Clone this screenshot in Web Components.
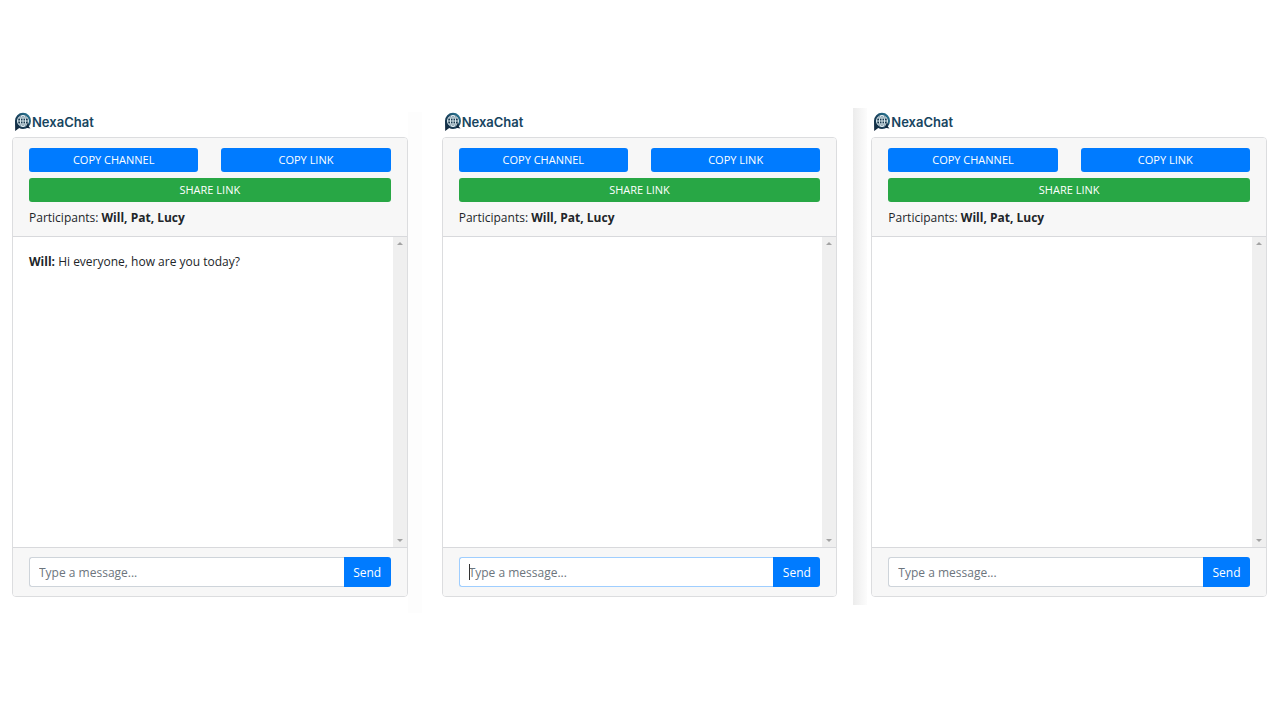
<!DOCTYPE html>
<html lang="en">
<head>
<meta charset="utf-8">
<meta name="viewport" content="width=device-width, initial-scale=1">
<title>NexaChat</title>
<style>
  body { margin: 0; background: #fff; color: #212529; font: 12px/18px "Open Sans", "Noto Sans", sans-serif; }
</style>
</head>
<body>
<chat-board>
  <chat-window people="Will, Pat, Lucy" edge="faint">
    <chat-message from="Will">Hi everyone, how are you today?</chat-message>
  </chat-window>
  <chat-window people="Will, Pat, Lucy" active></chat-window>
  <chat-window people="Will, Pat, Lucy" edge="shade"></chat-window>
</chat-board>
<script>
class BaseElement extends HTMLElement {
  constructor() {
    super();
    this.attachShadow({ mode: "open" });
  }
  connectedCallback() {
    this.shadowRoot.innerHTML = this.render();
  }
}

customElements.define("chat-board", class extends BaseElement {
  render() {
    return `<style>
      :host { display: block; }
      main { display: grid; grid-template-columns: repeat(3, minmax(0, 1fr)); align-items: start; gap: 34px; box-sizing: border-box; min-height: 100vh; padding: 112px 13px 24px 12px; }
    </style><main><slot></slot></main>`;
  }
});

customElements.define("nexa-logo", class extends BaseElement {
  render() {
    return `<style>
      :host { display: flex; align-items: center; height: 20px; padding-left: 2px; color: #17455f; font: 600 13px/20px Inter, sans-serif; }
      svg { display: block; }
    </style>
    <svg width="18" height="20" viewBox="0 0 18 20" aria-hidden="true">
      <defs><linearGradient id="g" x1="1" y1="0" x2="0" y2="1"><stop offset="0" stop-color="#2c86a3"/><stop offset=".5" stop-color="#1b4560"/><stop offset="1" stop-color="#0f2237"/></linearGradient></defs>
      <path d="M9 .8a8 8 0 0 1 8 8.200 8 8 0 0 1-8 8c-1.400 0-2.700-.3-3.800-.9L1.200 19 1 9A8 8 0 0 1 9 .8z" fill="url(#g)"/>
      <path d="M14 13.500l2.500 3-4.500-.8z" fill="#11283e"/>
      <circle cx="9" cy="9" r="6" fill="#17364c"/>
      <g fill="none" stroke="#dcebf0" stroke-width="1">
        <circle cx="9" cy="9" r="5.500"/>
        <ellipse cx="9" cy="9" rx="2.600" ry="5.500"/>
        <path d="M9 3.500v11M3.500 9h11M4.500 6h9M4.500 12h9"/>
      </g>
      <path d="M13.500 11.500c1 1 .4 2.700-1.100 3.100" fill="none" stroke="#11283e" stroke-width="1.500"/>
    </svg><span>NexaChat</span>`;
  }
});

customElements.define("action-button", class extends BaseElement {
  render() {
    return `<style>
      :host { display: block; }
      button { display: block; box-sizing: border-box; width: 100%; height: 24px; padding: 0; border: 0; border-radius: 3px; background: #007bff; color: #fff; font: 11px/24px "Open Sans", "Noto Sans", sans-serif; text-transform: uppercase; cursor: pointer; }
      :host([variant="success"]) button { background: #28a745; }
    </style><button type="button"><slot></slot></button>`;
  }
});

customElements.define("chat-message", class extends BaseElement {
  render() {
    return `<style>
      :host { display: block; line-height: 18px; }
      p { margin: 0; }
    </style><p><b>${this.getAttribute("from")}:</b> <slot></slot></p>`;
  }
});

customElements.define("scroll-track", class extends BaseElement {
  render() {
    return `<style>
      :host { display: flex; flex-direction: column; justify-content: space-between; align-items: center; box-sizing: border-box; width: 14px; padding: 4px 0; background: #efefef; }
      svg { display: block; fill: #a3a3a3; }
    </style>
    <svg width="6" height="5" viewBox="0 0 6 5" aria-hidden="true"><path d="M0 4h6L3 1z"/></svg>
    <svg width="6" height="5" viewBox="0 0 6 5" aria-hidden="true"><path d="M0 1h6L3 4z"/></svg>`;
  }
});

customElements.define("message-form", class extends BaseElement {
  render() {
    return `<style>
      :host { display: block; }
      form { display: flex; position: relative; height: 30px; margin: 0; }
      input { flex: 1; min-width: 0; box-sizing: border-box; margin: 0; padding: 2px 9px 0; border: 1px solid #ced4da; border-right: 0; border-radius: 3px 0 0 3px; background: #fff; color: #495057; font: 12px/18px "Open Sans", "Noto Sans", sans-serif; outline: 0; }
      input::placeholder { color: #6c757d; opacity: 1; }
      button { width: 47px; padding: 2px 0 0; border: 0; border-radius: 0 3px 3px 0; background: #007bff; color: #fff; font: 12px/18px "Open Sans", "Noto Sans", sans-serif; cursor: pointer; }
      i { display: none; }
      :host([active]) input { border-color: #9fceff; }
      :host([active]) i { display: block; position: absolute; left: 10px; top: 7px; width: 1px; height: 16px; background: #333; }
    </style>
    <form onsubmit="return false">
      <input type="text" placeholder="Type a message..." aria-label="Type a message">
      <i></i>
      <button type="submit">Send</button>
    </form>`;
  }
});

customElements.define("chat-window", class extends BaseElement {
  render() {
    return `<style>
      :host { display: block; position: relative; min-width: 0; }
      :host([edge])::before { content: ""; position: absolute; z-index: -1; width: 14px; }
      :host([edge="faint"])::before { left: 100%; top: 0; bottom: -16px; background: #fdfdfd; }
      :host([edge="shade"])::before { left: -18px; top: -4px; bottom: -8px; background: linear-gradient(90deg, #ececec, #fcfcfc); }
      .card { margin-top: 5px; border: 1px solid #dcdddf; border-radius: 4px; background: #fff; overflow: hidden; }
      header, footer { padding: 9px 16px; background: #f7f7f7; }
      header { padding-top: 10px; border-bottom: 1px solid #d8d9dc; }
      footer { border-top: 1px solid #d8d9dc; }
      .pair { display: grid; grid-template-columns: 1fr 1fr; gap: 23px; margin-bottom: 6px; }
      p { margin: 7px 0 0; line-height: 18px; }
      .body { display: flex; height: 310px; }
      .log { flex: 1; min-width: 0; padding: 16px; }
    </style>
    <nexa-logo></nexa-logo>
    <section class="card">
      <header>
        <div class="pair"><action-button>Copy channel</action-button><action-button>Copy link</action-button></div>
        <action-button variant="success">Share link</action-button>
        <p>Participants: <b>${this.getAttribute("people")}</b></p>
      </header>
      <div class="body"><div class="log"><slot></slot></div><scroll-track></scroll-track></div>
      <footer><message-form ${this.hasAttribute("active") ? "active" : ""}></message-form></footer>
    </section>`;
  }
});
</script>
</body>
</html>
